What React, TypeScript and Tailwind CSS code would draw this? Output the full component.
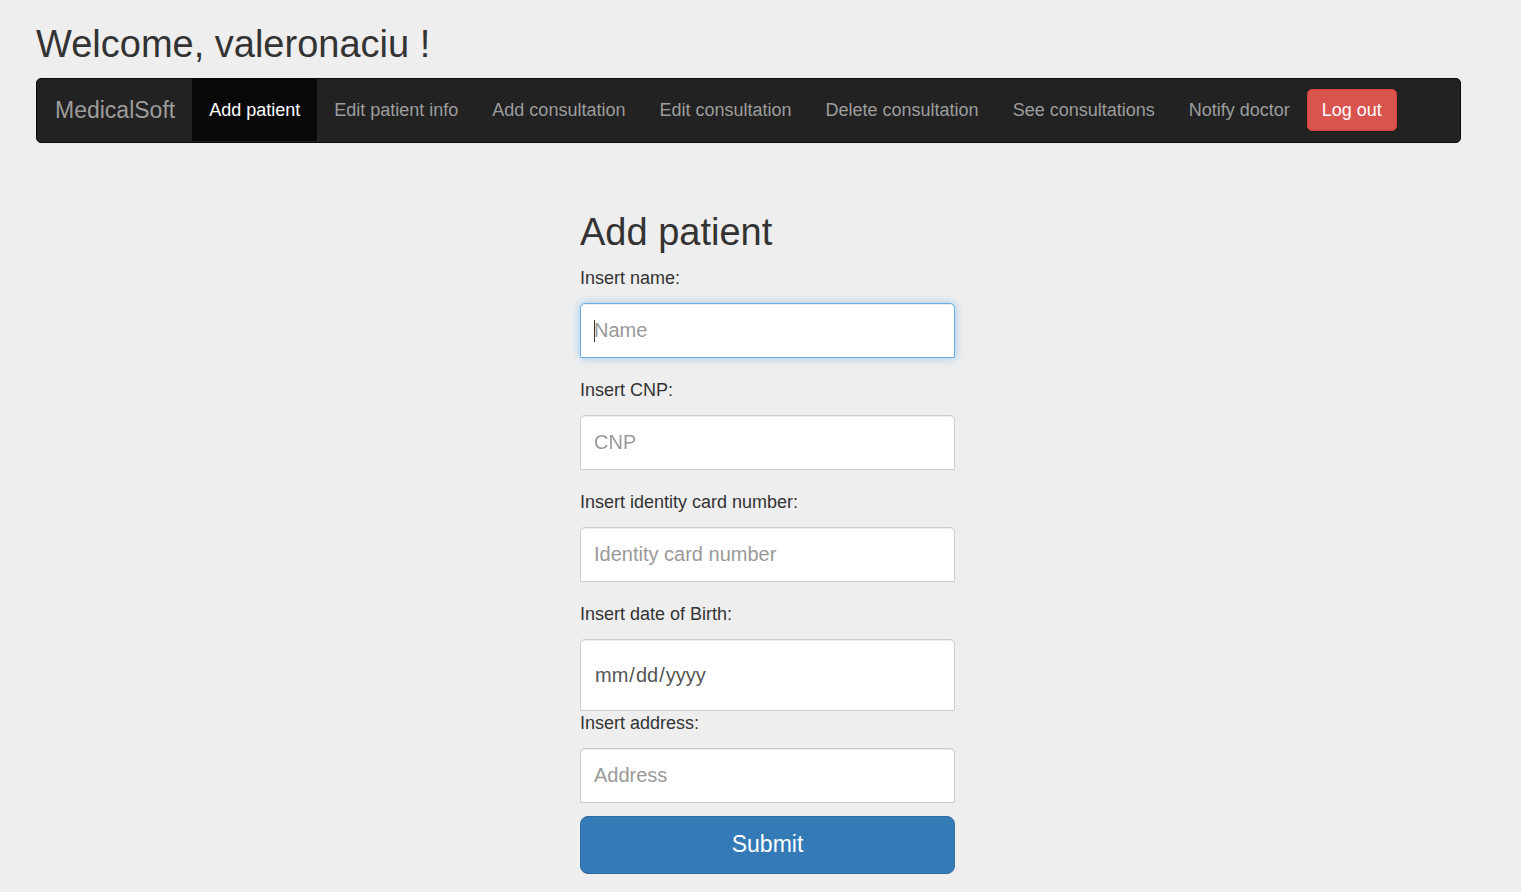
import { useState } from "react";

const links = [
  "Add patient",
  "Edit patient info",
  "Add consultation",
  "Edit consultation",
  "Delete consultation",
  "See consultations",
  "Notify doctor",
];

type FieldProps = {
  id: string;
  label: string;
  placeholder?: string;
  type?: string;
  autoFocus?: boolean;
  inputClass?: string;
  className?: string;
};

function Field({ id, label, placeholder, type = "text", autoFocus, inputClass = "h-[55px]", className = "" }: FieldProps) {
  return (
    <div className={`flex flex-col gap-[13px] ${className}`}>
      <label htmlFor={id} className="text-lg leading-[24px]">
        {label}
      </label>
      <div className="relative flex items-center">
        <input
          id={id}
          name={id}
          type={type}
          placeholder={placeholder}
          autoFocus={autoFocus}
          className={`peer w-full rounded-t-[5px] border border-[#ccc] bg-white px-[13px] text-xl text-[#555] shadow-[inset_0_1px_1px_rgba(0,0,0,0.075)] outline-none placeholder:text-[#999] placeholder-shown:caret-transparent focus:border-[#66afe9] focus:shadow-[inset_0_1px_1px_rgba(0,0,0,0.075),0_0_10px_rgba(102,175,233,0.6)] [&::-webkit-calendar-picker-indicator]:hidden ${inputClass}`}
        />
        {/* Insertion bar shown while an empty text field has focus */}
        {placeholder && (
          <span
            aria-hidden="true"
            className="pointer-events-none absolute left-[14px] hidden h-[22px] w-px bg-[#333] peer-focus:peer-placeholder-shown:block"
          />
        )}
      </div>
    </div>
  );
}

export default function App() {
  const [active, setActive] = useState(links[0]);

  return (
    <div className="min-h-screen bg-[#eee] pt-6 pr-[22px] pb-[18px] pl-9 font-['Liberation_Sans',Arial,sans-serif] text-[#333]">
      <h1 className="text-[38px] leading-[41px]">Welcome, valeronaciu !</h1>

      <nav className="mt-[13px] mr-[38px] flex flex-wrap rounded-[5px] border border-[#080808] bg-[#222] pb-px">
        <a href="#home" className="flex h-[62px] items-center pr-[17px] pl-[18px] text-[23px] text-[#9d9d9d]">
          MedicalSoft
        </a>
        <ul className="flex flex-wrap">
          {links.map((name) => (
            <li key={name}>
              <a
                href="#page"
                onClick={() => setActive(name)}
                aria-current={name === active ? "page" : undefined}
                className={`flex h-[62px] items-center px-[17px] text-lg ${
                  name === active ? "bg-[#080808] text-white" : "text-[#9d9d9d] hover:text-white"
                }`}
              >
                {name}
              </a>
            </li>
          ))}
        </ul>
        <button
          type="button"
          className="mt-[10px] h-[42px] rounded-[5px] border border-[#d43f3a] bg-[#d9534f] px-[14px] text-lg text-white"
        >
          Log out
        </button>
      </nav>

      <form className="mx-auto mt-[69px] w-full max-w-[375px]" onSubmit={(e) => e.preventDefault()}>
        <h2 className="mb-[13px] text-[38px] leading-[41px]">Add patient</h2>
        <Field id="name" label="Insert name:" placeholder="Name" autoFocus className="mb-5" />
        <Field id="cnp" label="Insert CNP:" placeholder="CNP" className="mb-5" />
        <Field id="card" label="Insert identity card number:" placeholder="Identity card number" className="mb-5" />
        <Field id="birth" label="Insert date of Birth:" type="date" inputClass="h-[72px]" />
        <Field id="address" label="Insert address:" placeholder="Address" className="mb-[13px]" />
        <button
          type="submit"
          className="h-[58px] w-full rounded-lg border border-[#2e6da4] bg-[#337ab7] pb-[2px] text-[23px] text-white"
        >
          Submit
        </button>
      </form>
    </div>
  );
}
